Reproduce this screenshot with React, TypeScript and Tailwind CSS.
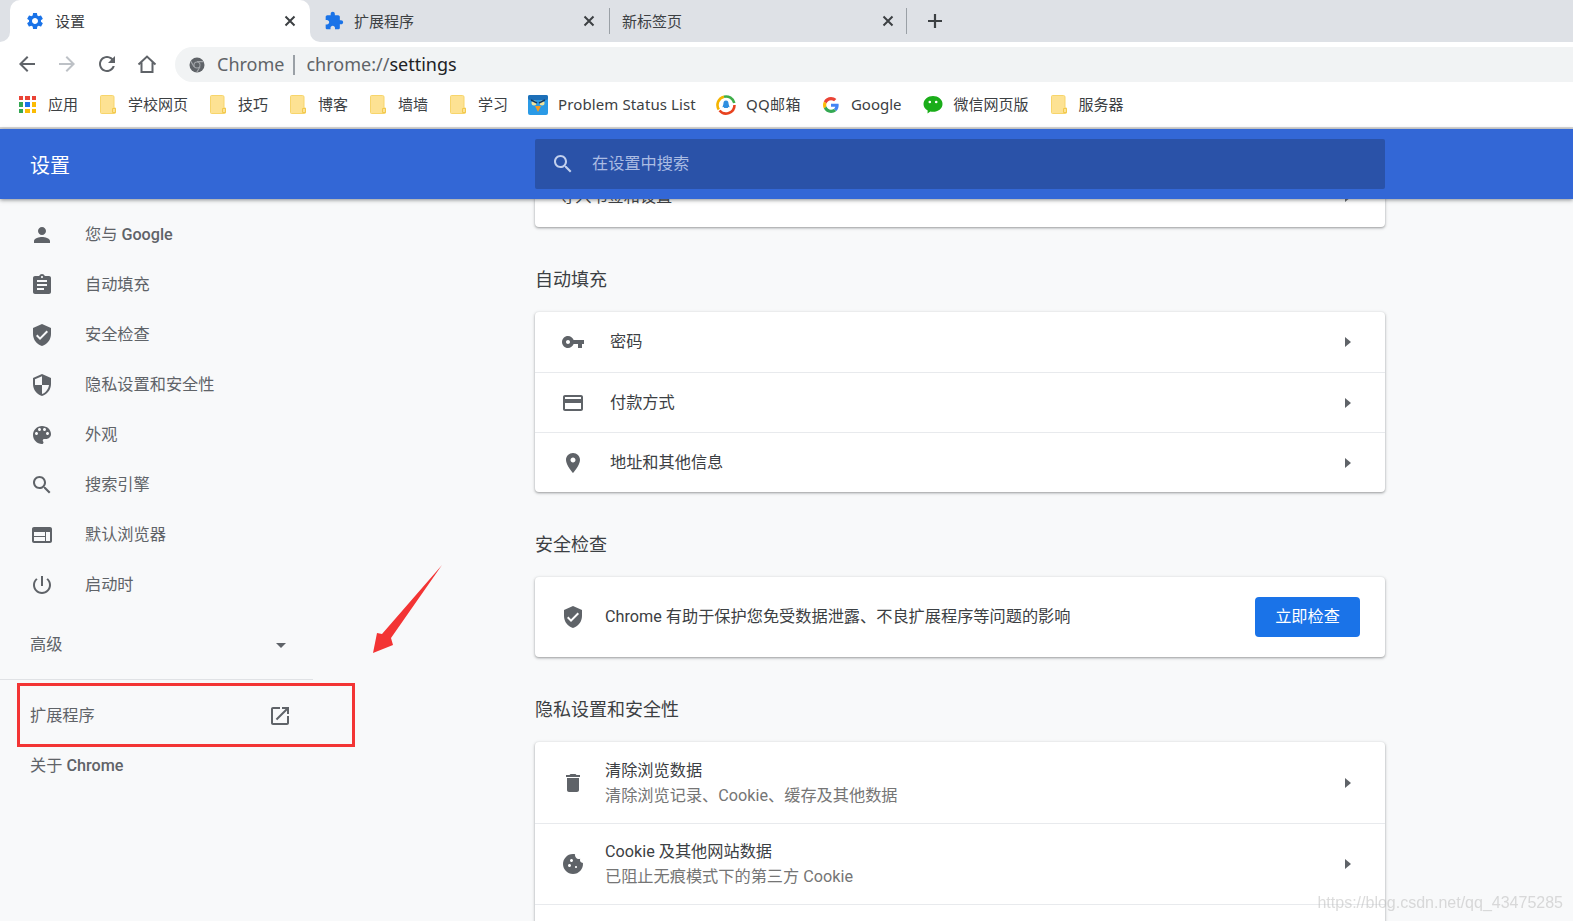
import React from 'react'

const P = {
  gear: 'M19.14 12.94c.04-.3.06-.61.06-.94 0-.32-.02-.64-.07-.94l2.03-1.58c.18-.14.23-.41.12-.61l-1.92-3.32c-.12-.22-.37-.29-.59-.22l-2.39.96c-.5-.38-1.03-.7-1.62-.94l-.36-2.54c-.04-.24-.24-.41-.48-.41h-3.84c-.24 0-.43.17-.47.41l-.36 2.54c-.59.24-1.13.57-1.62.94l-2.39-.96c-.22-.08-.47 0-.59.22L2.74 8.87c-.12.21-.08.47.12.61l2.03 1.58c-.05.3-.09.63-.09.94s.02.64.07.94l-2.03 1.58c-.18.14-.23.41-.12.61l1.92 3.32c.12.22.37.29.59.22l2.39-.96c.5.38 1.03.7 1.62.94l.36 2.54c.05.24.24.41.48.41h3.84c.24 0 .44-.17.47-.41l.36-2.54c.59-.24 1.13-.56 1.62-.94l2.39.96c.22.08.47 0 .59-.22l1.92-3.32c.12-.22.07-.47-.12-.61l-2.01-1.58zM12 15.6c-1.98 0-3.6-1.62-3.6-3.6s1.62-3.6 3.6-3.6 3.6 1.62 3.6 3.6-1.62 3.6-3.6 3.6z',
  puzzle: 'M20.5 11H19V7c0-1.1-.9-2-2-2h-4V3.5C13 2.12 11.88 1 10.5 1S8 2.12 8 3.5V5H4c-1.1 0-1.99.9-1.99 2v3.8H3.5c1.49 0 2.7 1.21 2.7 2.7s-1.21 2.7-2.7 2.7H2V20c0 1.1.9 2 2 2h3.8v-1.5c0-1.49 1.21-2.7 2.7-2.7 1.49 0 2.7 1.21 2.7 2.7V22H17c1.1 0 2-.9 2-2v-4h1.5c1.38 0 2.5-1.12 2.5-2.5S21.88 11 20.5 11z',
  person: 'M12 12c2.21 0 4-1.79 4-4s-1.79-4-4-4-4 1.79-4 4 1.79 4 4 4zm0 2c-2.67 0-8 1.34-8 4v2h16v-2c0-2.66-5.33-4-8-4z',
  clipboard: 'M19 3h-4.18C14.4 1.84 13.3 1 12 1c-1.3 0-2.4.84-2.82 2H5c-1.1 0-2 .9-2 2v14c0 1.1.9 2 2 2h14c1.1 0 2-.9 2-2V5c0-1.1-.9-2-2-2zm-7 0c.55 0 1 .45 1 1s-.45 1-1 1-1-.45-1-1 .45-1 1-1zm2 14H7v-2h7v2zm3-4H7v-2h10v2zm0-4H7V7h10v2z',
  shieldCheck: 'M12 1L3 5v6c0 5.55 3.84 10.74 9 12 5.16-1.26 9-6.45 9-12V5l-9-4zm-2 16l-4-4 1.41-1.41L10 14.17l6.59-6.59L18 9l-8 8z',
  shield: 'M12 1L3 5v6c0 5.55 3.84 10.74 9 12 5.16-1.26 9-6.45 9-12V5l-9-4zm0 10.99h7c-.53 4.12-3.28 7.79-7 8.94V12H5V6.3l7-3.11v8.8z',
  palette: 'M12 3c-4.97 0-9 4.03-9 9s4.03 9 9 9c.83 0 1.5-.67 1.5-1.5 0-.39-.15-.74-.39-1.01-.23-.26-.38-.61-.38-.99 0-.83.67-1.5 1.5-1.5H16c2.76 0 5-2.24 5-5 0-4.42-4.03-8-9-8zm-5.5 9c-.83 0-1.5-.67-1.5-1.5S5.67 9 6.5 9 8 9.67 8 10.5 7.33 12 6.5 12zm3-4C8.67 8 8 7.33 8 6.5S8.67 5 9.5 5s1.5.67 1.5 1.5S10.33 8 9.5 8zm5 0c-.83 0-1.5-.67-1.5-1.5S13.67 5 14.5 5s1.5.67 1.5 1.5S15.33 8 14.5 8zm3 4c-.83 0-1.5-.67-1.5-1.5S16.67 9 17.5 9s1.5.67 1.5 1.5-.67 1.5-1.5 1.5z',
  search: 'M15.5 14h-.79l-.28-.27C15.41 12.59 16 11.11 16 9.5 16 5.91 13.09 3 9.5 3S3 5.91 3 9.5 5.91 16 9.5 16c1.61 0 3.09-.59 4.23-1.57l.27.28v.79l5 4.99L20.49 19l-4.99-5zm-6 0C7.01 14 5 11.99 5 9.5S7.01 5 9.5 5 14 7.01 14 9.5 11.99 14 9.5 14z',
  web: 'M20 4H4c-1.1 0-1.99.9-1.99 2L2 18c0 1.1.9 2 2 2h16c1.1 0 2-.9 2-2V6c0-1.1-.9-2-2-2zm-5 14H4v-4h11v4zm0-5H4V9h11v4zm5 5h-4V9h4v9z',
  power: 'M13 3h-2v10h2V3zm4.83 2.17l-1.42 1.42C17.99 7.86 19 9.81 19 12c0 3.87-3.13 7-7 7s-7-3.13-7-7c0-2.19 1.01-4.14 2.58-5.42L6.17 5.17C4.23 6.82 3 9.26 3 12c0 4.97 4.03 9 9 9s9-4.03 9-9c0-2.74-1.23-5.18-3.17-6.83z',
  open: 'M19 19H5V5h7V3H5c-1.11 0-2 .9-2 2v14c0 1.1.89 2 2 2h14c1.1 0 2-.9 2-2v-7h-2v7zM14 3v2h3.59l-9.83 9.83 1.41 1.41L19 6.41V10h2V3h-7z',
  key: 'M12.65 10C11.83 7.67 9.61 6 7 6c-3.31 0-6 2.69-6 6s2.69 6 6 6c2.61 0 4.83-1.67 5.65-4H17v4h4v-4h2v-4H12.65zM7 14c-1.1 0-2-.9-2-2s.9-2 2-2 2 .9 2 2-.9 2-2 2z',
  card: 'M20 4H4c-1.11 0-1.99.89-1.99 2L2 18c0 1.11.89 2 2 2h16c1.11 0 2-.89 2-2V6c0-1.11-.89-2-2-2zm0 14H4v-6h16v6zm0-10H4V6h16v2z',
  place: 'M12 2C8.13 2 5 5.13 5 9c0 5.25 7 13 7 13s7-7.75 7-13c0-3.87-3.13-7-7-7zm0 9.5c-1.38 0-2.5-1.12-2.5-2.5s1.12-2.5 2.5-2.5 2.5 1.12 2.5 2.5-1.12 2.5-2.5 2.5z',
  trash: 'M6 19c0 1.1.9 2 2 2h8c1.1 0 2-.9 2-2V7H6v12zM19 4h-3.5l-1-1h-5l-1 1H5v2h14V4z',
  cookie: 'M21.95 10.99c-1.79-.03-3.7-1.95-2.68-4.22-2.97 1-5.78-1.59-5.19-4.56C7.11.74 2 6.41 2 12c0 5.52 4.48 10 10 10 5.89 0 10.54-5.08 9.95-11.01zM8.5 15c-.83 0-1.5-.67-1.5-1.5S7.67 12 8.5 12s1.5.67 1.5 1.5S9.33 15 8.5 15zm2-5C9.67 10 9 9.33 9 8.5S9.67 7 10.5 7s1.5.67 1.5 1.5-.67 1.5-1.5 1.5zm4.5 6c-.55 0-1-.45-1-1s.45-1 1-1 1 .45 1 1-.45 1-1 1z',
  reload: 'M17.65 6.35C16.2 4.9 14.21 4 12 4c-4.42 0-7.99 3.58-7.99 8s3.57 8 7.99 8c3.73 0 6.84-2.55 7.73-6h-2.08c-.82 2.33-3.04 4-5.65 4-3.31 0-6-2.69-6-6s2.69-6 6-6c1.66 0 3.14.69 4.22 1.78L13 11h7V4l-2.35 2.35z',
  back: 'M20 11H7.83l5.59-5.59L12 4l-8 8 8 8 1.41-1.41L7.83 13H20v-2z',
  forward: 'M12 4l-1.41 1.41L16.17 11H4v2h12.17l-5.58 5.59L12 20l8-8z',
}

function Icon({ d, className = 'w-6 h-6 text-[#5f6368]' }: { d: string; className?: string }) {
  return (
    <svg className={className} viewBox="0 0 24 24" fill="currentColor">
      <path d={d} />
    </svg>
  )
}

function Close() {
  return (
    <svg className="w-3 h-3 shrink-0 text-[#3c4043]" viewBox="0 0 12 12" stroke="currentColor" strokeWidth="2">
      <path d="M1.5 1.5l9 9M10.5 1.5l-9 9" />
    </svg>
  )
}

function Caret() {
  return <div className="w-0 h-0 border-y-[5px] border-y-transparent border-l-[6px] border-l-[#5f6368]" />
}

function Folder() {
  return (
    <svg className="w-4 h-[19px] shrink-0" viewBox="0 0 16 19">
      <path d="M1.5 .5h11a1.5 1.5 0 0 1 1.5 1.5v11h1.5v4.5a1 1 0 0 1-1 1h-13a1 1 0 0 1-1-1V1.5a1 1 0 0 1 1-1z" fill="#fde293" stroke="#f7d56b" />
      <path d="M12.5 13.5h3v4h-3z" fill="#fde293" stroke="#f2c94c" />
    </svg>
  )
}

function Apps() {
  const colors = ['#ea4335', '#ea4335', '#ea4335', '#34a853', '#1a73e8', '#fbbc04', '#34a853', '#fbbc04', '#fbbc04']
  return (
    <div className="grid grid-cols-3 gap-[2px] w-[17px] shrink-0">
      {colors.map((c, i) => (
        <div key={i} className="w-[4.3px] h-[4.3px]" style={{ background: c }} />
      ))}
    </div>
  )
}

function BirdIcon() {
  return (
    <svg className="w-5 h-5 shrink-0 -ml-[2px] -mr-[2px]" viewBox="0 0 20 20">
      <rect width="20" height="20" rx="2" fill="#2a9ae6" />
      <rect width="20" height="5" rx="2" fill="#1d6fb8" />
      <circle cx="6" cy="8" r="2.5" fill="#f3e39a" />
      <circle cx="14" cy="8" r="2.5" fill="#f3e39a" />
      <path d="M3 5l6 3M17 5l-6 3" stroke="#123a66" strokeWidth="1.5" />
      <path d="M7 11h6l-3 6z" fill="#f59a23" />
    </svg>
  )
}

function QQMail() {
  return (
    <svg className="w-5 h-5 shrink-0 -ml-[2px] -mr-[2px]" viewBox="0 0 20 20" fill="none">
      <path d="M2.800 14.500A8.500 8.500 0 0 1 8 1.700" stroke="#f5b400" strokeWidth="2.600" />
      <path d="M8 1.700A8.500 8.500 0 0 1 18.300 8" stroke="#3fae49" strokeWidth="2.600" />
      <path d="M18.500 10A8.500 8.500 0 0 1 3.500 15.500" stroke="#e8431f" strokeWidth="2.600" />
      <path d="M10 5.5c2 0 2.6 1.8 2.6 3.4l1 3.4-1.3-.4-.5 1H8.2l-.5-1-1.3.4 1-3.4C7.4 7.3 8 5.500 10 5.500z" fill="#2f8fe0" />
    </svg>
  )
}

function GoogleG() {
  return (
    <svg className="w-4 h-4 shrink-0" viewBox="0 0 48 48">
      <path fill="#EA4335" d="M24 9.5c3.54 0 6.71 1.22 9.21 3.6l6.85-6.85C35.9 2.38 30.47 0 24 0 14.62 0 6.51 5.38 2.56 13.22l7.98 6.19C12.43 13.72 17.74 9.5 24 9.5z" />
      <path fill="#4285F4" d="M46.98 24.55c0-1.57-.15-3.09-.38-4.55H24v9.02h12.94c-.58 2.96-2.26 5.48-4.78 7.18l7.73 6c4.51-4.18 7.09-10.36 7.09-17.65z" />
      <path fill="#FBBC05" d="M10.53 28.59c-.48-1.45-.76-2.99-.76-4.59s.27-3.14.76-4.59l-7.98-6.19C.92 16.46 0 20.12 0 24c0 3.88.92 7.54 2.56 10.78l7.97-6.19z" />
      <path fill="#34A853" d="M24 48c6.48 0 11.93-2.13 15.89-5.81l-7.73-6c-2.15 1.45-4.92 2.3-8.16 2.3-6.26 0-11.57-4.22-13.47-9.91l-7.98 6.19C6.51 42.62 14.62 48 24 48z" />
    </svg>
  )
}

function WeChat() {
  return (
    <svg className="w-5 h-5 shrink-0 -ml-px -mr-px" viewBox="0 0 20 20">
      <path d="M10 1c5 0 9.500 3.300 9.500 8s-4.500 7.800-9.500 7.800c-1 0-1.800-.1-2.600-.3L4.500 18.500l.2-3C2 14 .5 11.700.5 9 .5 4.300 5 1 10 1z" fill="#1aad19" />
      <circle cx="6.800" cy="7" r="1.300" fill="#fff" />
      <circle cx="13.200" cy="7" r="1.300" fill="#fff" />
    </svg>
  )
}

function ChromeGlyph() {
  return (
    <svg className="w-4 h-4 shrink-0" viewBox="0 0 16 16">
      <circle cx="8" cy="8" r="7.500" fill="#5f6368" />
      <path d="M8 4.600h6.500M5 9.700L1.800 4.200M11 9.700L7.800 15.300" stroke="#a3a6aa" strokeWidth="1.200" />
      <circle cx="8" cy="8" r="3.500" fill="#a3a6aa" />
      <circle cx="8" cy="8" r="2.500" fill="#5f6368" />
    </svg>
  )
}

const bookmarks = [
  { icon: <Apps />, label: '应用' },
  { icon: <Folder />, label: '学校网页' },
  { icon: <Folder />, label: '技巧' },
  { icon: <Folder />, label: '博客' },
  { icon: <Folder />, label: '墙墙' },
  { icon: <Folder />, label: '学习' },
  { icon: <BirdIcon />, label: 'Problem Status List', cls: 'tracking-[0.11px]' },
  { icon: <QQMail />, label: 'QQ邮箱', cls: 'tracking-[0.4px]' },
  { icon: <GoogleG />, label: 'Google' },
  { icon: <WeChat />, label: '微信网页版' },
  { icon: <Folder />, label: '服务器' },
]

const nav = [
  { d: P.person, label: <>您与 <span className="font-medium">Google</span></> },
  { d: P.clipboard, label: '自动填充' },
  { d: P.shieldCheck, label: '安全检查' },
  { d: P.shield, label: '隐私设置和安全性' },
  { d: P.palette, label: '外观' },
  { d: P.search, label: '搜索引擎' },
  { d: P.web, label: '默认浏览器' },
  { d: P.power, label: '启动时' },
]

function Row({ d, label, border }: { d: string; label: string; border?: boolean }) {
  return (
    <div className={`flex items-center h-[60px] pl-[26px] pr-[34px] ${border ? 'border-t border-[#e8eaed]' : ''}`}>
      <Icon d={d} />
      <div className={`ml-[25px] flex-1 text-[#3c4043] ${border ? 'pt-px' : ''}`}>{label}</div>
      <Caret />
    </div>
  )
}

function Row2({ d, title, sub, border }: { d: string; title: string; sub: string; border?: boolean }) {
  return (
    <div className={`flex items-center h-[81px] pl-[26px] pr-[34px] ${border ? 'border-t border-[#e8eaed]' : ''}`}>
      <Icon d={d} />
      <div className="ml-[20px] flex-1">
        <div className="text-[#3c4043] leading-[25px]">{title}</div>
        <div className="text-[#757575] leading-[25px]">{sub}</div>
      </div>
      <Caret />
    </div>
  )
}

function Title({ children }: { children: React.ReactNode }) {
  return <div className="pt-[40px] pb-[19px] text-[18px] leading-[26px] text-[#3c4043]">{children}</div>
}

const card = 'bg-white rounded-[4px] shadow-[0_1px_2px_rgba(60,64,67,0.35),0_1px_3px_1px_rgba(60,64,67,0.15)]'

export default function App() {
  return (
    <div className="relative w-full h-[921px] overflow-hidden flex flex-col bg-[#f8f9fa] text-[16.2px] font-['Roboto','Noto_Sans_CJK_SC',sans-serif]">
      {/* tab strip */}
      <div className="flex items-center h-[42px] bg-[#dee1e6] text-[15px] text-[#3c4043] font-['Noto_Sans','Noto_Sans_CJK_SC',sans-serif] shrink-0">
        <div className="relative ml-[10px] w-[300px] h-full bg-white rounded-t-[10px] flex items-center pl-[15px] pr-[14px]">
          <span className="absolute left-[-10px] bottom-0 w-[10px] h-[10px] bg-white"><span className="block w-full h-full bg-[#dee1e6] rounded-br-[10px]" /></span>
          <span className="absolute right-[-10px] bottom-0 w-[10px] h-[10px] bg-white"><span className="block w-full h-full bg-[#dee1e6] rounded-bl-[10px]" /></span>
          <Icon d={P.gear} className="w-5 h-5 text-[#1a73e8]" />
          <span className="ml-[10px] flex-1">设置</span>
          <Close />
        </div>
        <div className="w-[300px] h-[26px] flex items-center pl-[14px] pr-[14px] border-r border-[#9aa0a6]">
          <Icon d={P.puzzle} className="w-5 h-5 text-[#1a73e8]" />
          <span className="ml-[10px] flex-1">扩展程序</span>
          <Close />
        </div>
        <div className="w-[297px] h-[26px] flex items-center pl-[12px] pr-[12px] border-r border-[#9aa0a6]">
          <span className="flex-1">新标签页</span>
          <Close />
        </div>
        <svg className="ml-[20px] w-4 h-4 text-[#3c4043]" viewBox="0 0 16 16" stroke="currentColor" strokeWidth="2.2">
          <path d="M8 1v14M1 8h14" />
        </svg>
      </div>

      {/* toolbar */}
      <div className="flex items-end h-[40px] bg-white shrink-0 pl-[15px]">
        <div className="flex items-center gap-[16px] w-[160px] pb-[6px]">
          <Icon d={P.back} className="w-6 h-6 text-[#5f6368]" />
          <Icon d={P.forward} className="w-6 h-6 text-[#bdc1c6]" />
          <Icon d={P.reload} className="w-6 h-6 text-[#5f6368]" />
          <svg className="w-6 h-6" viewBox="0 0 24 24" fill="none" stroke="#5f6368" strokeWidth="2">
            <path d="M3.500 12.500L12 4.500l8.500 8M6.500 10.500V20h11v-9.500" />
          </svg>
        </div>
        <div className="flex-1 h-[35px] bg-[#f1f3f4] rounded-l-full flex items-center pl-[14px] text-[18px] font-['Noto_Sans',sans-serif]">
          <ChromeGlyph />
          <span className="ml-[12px] text-[#5f6368]">Chrome</span>
          <span className="ml-[9px] mr-[11px] w-[2px] h-[20px] bg-[#9aa0a6]" />
          <span className="text-[#5f6368]">chrome://<span className="text-[#202124]">settings</span></span>
        </div>
      </div>

      {/* bookmarks */}
      <div className="flex items-center gap-[22px] h-[47px] pl-[19px] bg-white border-b-2 border-[#d8d8d8] text-[15px] text-[#3c4043] font-['Noto_Sans','Noto_Sans_CJK_SC',sans-serif] shrink-0">
        {bookmarks.map((b, i) => (
          <div key={i} className="flex items-center gap-[12px]">
            {b.icon}
            <span className={`whitespace-nowrap ${b.cls ?? ''}`}>{b.label}</span>
          </div>
        ))}
      </div>

      {/* settings header */}
      <div className="relative z-10 flex items-center h-[70px] bg-[#3367d6] shadow-[0_1px_4px_rgba(60,64,67,0.6)] shrink-0">
        <div className="w-[535px] pl-[30px] pt-[3px] text-[20px] text-white">设置</div>
        <div className="w-[850px] h-[50px] bg-[#2a52a8] rounded-[2px] flex items-center pl-[16px] text-[#abbce3]">
          <Icon d={P.search} className="w-6 h-6 text-[#c2d0ee]" />
          <span className="ml-[17px] pt-px">在设置中搜索</span>
        </div>
      </div>

      <div className="flex flex-1 min-h-0">
        <aside className="w-[535px] shrink-0 pt-[11px] text-[#5f6368]">
          {nav.map((n, i) => (
            <div key={i} className="flex items-center h-[50px] pl-[30px]">
              <Icon d={n.d} />
              <span className="ml-[31px]">{n.label}</span>
            </div>
          ))}
          <div className="flex items-center justify-between h-[50px] w-[313px] mt-[10px] pl-[30px] pr-[27px]">
            <span>高级</span>
            <div className="w-0 h-0 border-x-[5px] border-x-transparent border-t-[5px] border-t-[#5f6368]" />
          </div>
          <div className="w-[313px] mt-[9px] border-t border-[#e0e2e5]" />
          <div className="flex items-center justify-between h-[50px] w-[313px] mt-[11px] pl-[30px] pr-[21px]">
            <span>扩展程序</span>
            <Icon d={P.open} />
          </div>
          <div className="flex items-center h-[50px] pl-[30px]">
            <span>关于 <span className="font-medium">Chrome</span></span>
          </div>
        </aside>

        <main className="w-[850px] shrink-0">
          <div className={`${card} -mt-[32px] flex items-center h-[60px] pl-[24px] pr-[34px]`}>
            <div className="flex-1 text-[#3c4043]">导入书签和设置</div>
            <Caret />
          </div>
          <Title>自动填充</Title>
          <div className={card}>
            <Row d={P.key} label="密码" />
            <Row d={P.card} label="付款方式" border />
            <Row d={P.place} label="地址和其他信息" border />
          </div>
          <Title>安全检查</Title>
          <div className={`${card} flex items-center h-[80px] pl-[26px] pr-[25px]`}>
            <Icon d={P.shieldCheck} />
            <div className="ml-[20px] flex-1 text-[#3c4043]">Chrome 有助于保护您免受数据泄露、不良扩展程序等问题的影响</div>
            <div className="flex items-center justify-center w-[105px] h-[40px] rounded-[4px] bg-[#1a73e8] text-white">立即检查</div>
          </div>
          <Title>隐私设置和安全性</Title>
          <div className={card}>
            <Row2 d={P.trash} title="清除浏览数据" sub="清除浏览记录、Cookie、缓存及其他数据" />
            <Row2 d={P.cookie} title="Cookie 及其他网站数据" sub="已阻止无痕模式下的第三方 Cookie" border />
            <div className="h-[60px] border-t border-[#e8eaed]" />
          </div>
        </main>
      </div>

      {/* annotation over the page */}
      <div className="absolute left-[17px] top-[683px] w-[338px] h-[64px] border-[3px] border-[#f33434]" />
      <svg className="absolute left-[370px] top-[562px] w-[75px] h-[95px]" viewBox="0 0 75 95">
        <path d="M72 3L21 76l2 7L3 91l4-20 5 1z" fill="#f33434" />
      </svg>
      <div className="absolute right-[10px] top-[891px] text-[16px] text-[#b8b8b8]/50 font-['Liberation_Sans',sans-serif] blur-[0.5px]">https://blog.csdn.net/qq_43475285</div>
    </div>
  )
}
